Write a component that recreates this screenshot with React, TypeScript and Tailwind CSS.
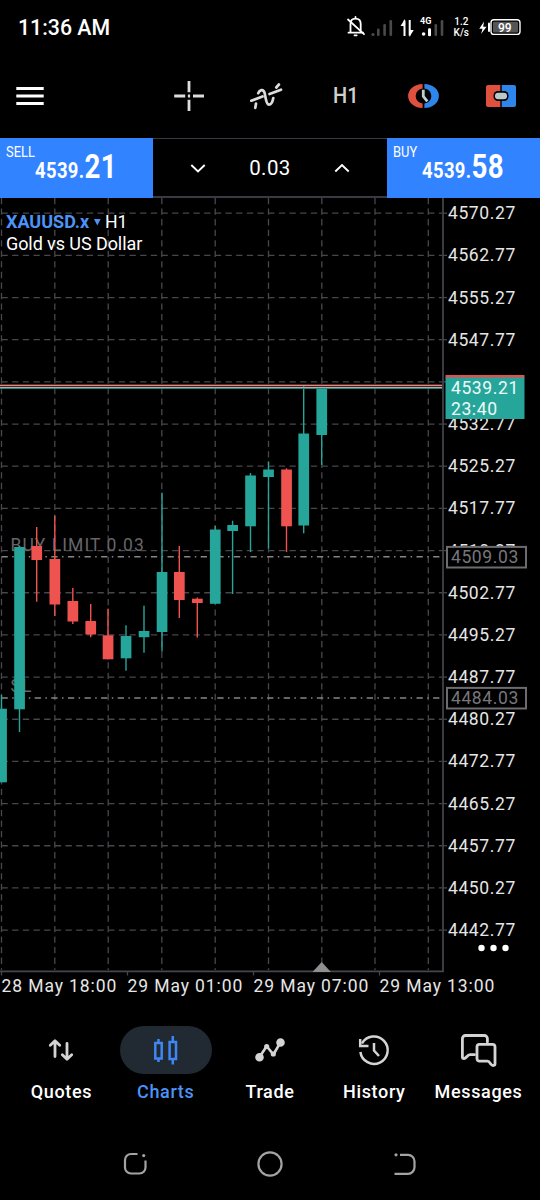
import type { ReactNode } from "react";

type Candle = {
  x: number;
  high: number;
  top: number;
  bottom: number;
  low: number;
  up: boolean;
};

const UP = "#26a69a";
const DOWN = "#ef5350";

const candles: Candle[] = [
  { x: 1.5, high: 695, top: 708.7, bottom: 782.3, low: 782.3, up: true },
  { x: 19.5, high: 546, top: 547, bottom: 709.3, low: 732, up: true },
  { x: 36.7, high: 527, top: 546, bottom: 560, low: 601.7, up: false },
  { x: 54.8, high: 515.7, top: 559, bottom: 604.5, low: 616, up: false },
  { x: 72.8, high: 588, top: 601, bottom: 621.5, low: 624, up: false },
  { x: 90.7, high: 604, top: 621, bottom: 634.5, low: 637.3, up: false },
  { x: 108, high: 608.7, top: 635.3, bottom: 659.3, low: 659.3, up: false },
  { x: 126, high: 625.3, top: 636, bottom: 658.3, low: 670.7, up: true },
  { x: 144, high: 605.7, top: 631, bottom: 637.2, low: 652.7, up: true },
  { x: 162, high: 492.7, top: 572, bottom: 632, low: 651.5, up: true },
  { x: 179.3, high: 546, top: 572, bottom: 600, low: 618, up: false },
  { x: 197.3, high: 597.5, top: 598.7, bottom: 603, low: 637.5, up: false },
  { x: 215.2, high: 526, top: 529.5, bottom: 603.8, low: 603.8, up: true },
  { x: 232.6, high: 520.7, top: 525, bottom: 531, low: 594, up: true },
  { x: 250.5, high: 473, top: 475.5, bottom: 526.3, low: 552, up: true },
  { x: 268.5, high: 461.5, top: 469.5, bottom: 477, low: 548.5, up: true },
  { x: 286.5, high: 468.3, top: 469.5, bottom: 526.3, low: 552, up: false },
  { x: 303.7, high: 385.7, top: 433.5, bottom: 525.5, low: 533.3, up: true },
  { x: 321.7, high: 387, top: 387.5, bottom: 435, low: 465, up: true },
];

const prices = [
  "4570.27", "4562.77", "4555.27", "4547.77", "4540.27", "4532.77",
  "4525.27", "4517.77", "4510.27", "4502.77", "4495.27", "4487.77",
  "4480.27", "4472.77", "4465.27", "4457.77", "4450.27", "4442.77",
];

const priceY = (i: number) => 213.2 + i * 42.17;

const columns = [1.5, 54.8, 108.2, 161.8, 215.2, 268.5, 321.8, 375, 428.3];

const times = [
  { x: 1.5, label: "28 May 18:00" },
  { x: 127.5, label: "29 May 01:00" },
  { x: 253.5, label: "29 May 07:00" },
  { x: 379.5, label: "29 May 13:00" },
];

function StatusBar() {
  return (
    <div className="flex h-[55px] items-center justify-between px-[18px]">
      <span className="text-[21.3px] font-medium leading-none">11:36 AM</span>
      <svg width="176" height="26" viewBox="346 15 176 26" fill="none">
        {/* muted bell */}
        <g stroke="#fff" strokeWidth="1.8" strokeLinecap="round">
          <path d="M350.5 32.5V24c0-3.5 2.2-5.3 5-5.3 3 0 5.2 2 5.2 5.3v8.5M348.5 32.7h14.5M355.5 17v1.5" />
          <path d="M348 19.5l16 14.7" />
          <path d="M354.5 35.3h2.2" />
        </g>
        <g fill="#4a4a4a">
          <circle cx="373" cy="34.5" r="1.6" />
          <rect x="377" y="28.5" width="2.6" height="7.5" rx="1.2" />
          <rect x="383.3" y="24" width="2.6" height="12" rx="1.2" />
          <rect x="389.5" y="20" width="2.6" height="16" rx="1.2" />
        </g>
        {/* data arrows */}
        <path d="M404.5 36V20.5M409.7 20v15.5" stroke="#fff" strokeWidth="2" />
        <path d="M400.5 26l4.5-7v7zM413.8 30l-4.5 7v-7z" fill="#fff" />
        <text x="420" y="23.5" fontSize="9" fontWeight="700" fill="#fff">4G</text>
        <circle cx="423.6" cy="34" r="1.8" fill="#fff" />
        <rect x="428" y="28.3" width="3" height="8" rx="1.3" fill="#fff" />
        <rect x="434.5" y="24" width="2.6" height="12" rx="1.2" fill="#4a4a4a" />
        <rect x="440.7" y="20" width="2.6" height="16" rx="1.2" fill="#4a4a4a" />
        <text x="461.3" y="25" fontSize="10" fontWeight="500" fill="#fff" textAnchor="middle">1.2</text>
        <text x="461.3" y="36" fontSize="10" fontWeight="500" fill="#fff" textAnchor="middle">K/s</text>
        <path d="M484 21.5l-4.7 7.3h3.2l-1.4 5.2 5.4-7.2h-3.3z" fill="#fff" />
        <path d="M489 23.5v7.5" stroke="#fff" strokeWidth="2" strokeLinecap="round" />
        <rect x="491" y="19.8" width="29" height="14.6" rx="3" stroke="#fff" strokeWidth="1.4" />
        <rect x="493" y="21.8" width="25" height="10.6" rx="1" fill="#555" />
        <text x="504.8" y="31.6" fontSize="12" fontWeight="500" fill="#fff" textAnchor="middle">99</text>
      </svg>
    </div>
  );
}

function Toolbar() {
  return (
    <div className="flex h-[83px] items-center justify-between pb-px pl-4 pr-[24px]">
      <svg width="28" height="20" viewBox="16 86 28 20" stroke="#fff" strokeWidth="2.8">
        <path d="M16.3 88.5h27.4M16.3 96h27.4M16.3 103.5h27.4" />
      </svg>
      <div className="flex w-[342px] items-center">
        <svg width="30" height="30" viewBox="174 81 30 30" stroke="#dcdcdc" strokeWidth="2.8">
          <path d="M174.2 96h11M193 96h11M189 81v11.2M189 99.8V111M187.9 96h2.2" />
        </svg>
        <svg className="ml-[45px]" width="34" height="28" viewBox="249 82 34 28" fill="none" stroke="#dcdcdc" strokeWidth="2.7" strokeLinecap="round">
          <path d="M251.3 100.7l11.2-4.2M269.5 94l11.5-4.3" />
          <path d="M258.2 93.2c1.3-3.2 5-4.800 6.300-.6 1.200 4 1.300 12 4.500 12 2.600 0 3.600-3 4.300-6.600" />
          <path d="M255.300 107.800l.7-4.300M276.300 87.500l2.600-3" />
        </svg>
        <span className="ml-[50px] block w-[24px] origin-left scale-x-[0.93] whitespace-nowrap text-[21.5px] font-medium leading-none text-[#cfcfcf]">
          H1
        </span>
        <svg className="ml-[51px]" width="31" height="26" viewBox="407.5 83 31 26" fill="none">
          <path d="M422.100 84A14.500 12 0 0 0 422.100 108V103.500A8.300 7.600 0 0 1 422.100 88.500z" fill="#e0503f" />
          <path d="M423.900 84A14.500 12 0 0 1 423.900 108V103.500A8.300 7.600 0 0 0 423.900 88.500z" fill="#2f86ea" />
          <path d="M422.800 89.800v6.500l4 5" stroke="#c3ccd2" strokeWidth="2.800" />
        </svg>
        <svg className="ml-auto" width="30" height="22" viewBox="486 85 30 22">
          <path d="M488 85h12.300v22H488a2 2 0 0 1-2-2V87a2 2 0 0 1 2-2z" fill="#e0503f" />
          <path d="M501.700 85H514a2 2 0 0 1 2 2v18a2 2 0 0 1-2 2h-12.300z" fill="#2f86ea" />
          <rect x="493.500" y="91" width="15" height="10" rx="4.500" fill="#000" />
          <rect x="495" y="92.700" width="12" height="6.600" rx="3" fill="#b9c8cc" />
        </svg>
      </div>
    </div>
  );
}

function PriceButton({ side, whole, cents }: { side: string; whole: string; cents: string }) {
  return (
    <button className="flex h-[60px] w-[153px] flex-col items-start bg-[#3183ff] px-1.5 pt-[7px] text-left">
      <span className="block origin-left scale-x-[0.86] text-[15px] leading-[15px]">{side}</span>
      <span className="-mt-[6px] block origin-left translate-x-[29px] scale-x-[0.84] whitespace-nowrap text-[22px] font-bold leading-[26px] tracking-[0.4px]">
        {whole}.<span className="text-[33px]">{cents}</span>
      </span>
    </button>
  );
}

function TradePanel() {
  return (
    <div className="flex h-[60px]">
      <PriceButton side="SELL" whole="4539" cents="21" />
      <div className="flex flex-1 items-center justify-between border-b-2 border-t border-[#3a3a45] px-[36px]">
        <svg width="18" height="12" viewBox="0 0 18 12" fill="none" stroke="#fff" strokeWidth="1.900">
          <path d="M2.300 3l6.700 6.500L15.700 3" />
        </svg>
        <span className="pt-px text-[20.500px] tracking-[0.400px]">0.03</span>
        <svg width="18" height="12" viewBox="0 0 18 12" fill="none" stroke="#fff" strokeWidth="1.900">
          <path d="M2.300 9.500L9 3l6.700 6.500" />
        </svg>
      </div>
      <PriceButton side="BUY" whole="4539" cents="58" />
    </div>
  );
}

function OrderTag({ y, price }: { y: number; price: string }) {
  return (
    <g>
      <rect x="447" y={y - 10.3} width="79" height="20.6" fill="#000" stroke="#6b6b70" strokeWidth="2" />
      <text x="451" y={y + 6} fill="#77777b">{price}</text>
    </g>
  );
}

function Chart() {
  return (
    <svg className="block" width="540" height="802" viewBox="0 198 540 802" fontSize="17.5" letterSpacing="0.6">
      <g stroke="#47474d" strokeWidth="1.3">
        {prices.map((p, i) => (
          <path key={p} d={`M1.5 ${priceY(i)}H442`} strokeDasharray="6.3 4.367" />
        ))}
        {columns.map((x) => (
          <path key={x} d={`M${x} 198V970`} strokeDasharray="6.3 4.25" />
        ))}
      </g>

      <g fill="#66666a" letterSpacing="1.05">
        <text x="10.5" y="551">BUY LIMIT 0.03</text>
        <text x="10.5" y="692">SL</text>
      </g>
      <g stroke="#858585" strokeWidth="1.6" strokeDasharray="6.300 4.400 1.500 4.400">
        <path d="M1.5 556.8H442" />
        <path d="M1.5 698H442" />
      </g>

      {candles.map((c) => (
        <g key={c.x} fill={c.up ? UP : DOWN}>
          <rect x={c.x - 0.7} y={c.high} width="1.4" height={c.low - c.high} />
          <rect x={c.x - 5.3} y={c.top} width="10.7" height={c.bottom - c.top} />
        </g>
      ))}

      {/* ask and bid */}
      <rect x="0" y="384.3" width="442" height="2.2" fill="#93403d" />
      <rect x="0" y="385" width="442" height="1" fill="#d98a84" />
      <rect x="0" y="387" width="442" height="1" fill="#a3b5b2" />
      <rect x="0" y="388" width="442" height="1" fill="#26857c" />

      {/* axes */}
      <g stroke="#45454f" strokeWidth="1.7">
        <path d="M443 198V972" />
        <path d="M0 971.3H443.8" />
        {times.map((t) => (
          <path key={t.x} d={`M${t.x} 971v4.5`} strokeWidth="1.3" />
        ))}
        {prices.map((p, i) => (
          <path key={p} d={`M443 ${priceY(i)}h4`} strokeWidth="1.3" />
        ))}
      </g>
      <path d="M312.5 972l9.2-10 9.2 10z" fill="#8f8f8f" />

      <g fill="#e6e6e6">
        {prices.map((p, i) => (
          <text key={p} x="448" y={priceY(i) + 6}>{p}</text>
        ))}
        {times.map((t) => (
          <text key={t.label} x={t.x} y="991.5" letterSpacing="0.9">{t.label}</text>
        ))}
      </g>

      <rect x="445.5" y="375" width="79" height="3" fill="#d9534f" />
      <rect x="445.5" y="377.5" width="79" height="41.5" fill={UP} />
      <g fill="#eefaf8">
        <text x="451" y="394">4539.21</text>
        <text x="451" y="415">23:40</text>
      </g>
      <OrderTag y={557.2} price="4509.03" />
      <OrderTag y={698.2} price="4484.03" />

      <g fill="#fff">
        <circle cx="481.5" cy="948" r="3.2" />
        <circle cx="493.5" cy="948" r="3.2" />
        <circle cx="505.5" cy="948" r="3.2" />
      </g>

      <g letterSpacing="0">
        <text x="6" y="228" fontSize="18" fontWeight="700" fill="#4c93f7">XAUUSD.x</text>
        <path d="M94 219h6.6l-3.3 6.5z" fill="#4c93f7" />
        <text x="105" y="228" fontSize="17.7" fill="#fff">H1</text>
        <text x="6" y="249.8" fontSize="18" letterSpacing="-0.08" fill="#fff">Gold vs US Dollar</text>
      </g>
    </svg>
  );
}

function NavItem({ label, active, children }: { label: string; active?: boolean; children: ReactNode }) {
  return (
    <div className="flex w-[104.3px] flex-col items-center">
      <div className={`flex h-12 w-[92px] items-center justify-center rounded-full ${active ? "bg-[#212932]" : ""}`}>
        <svg width="40" height="36" viewBox="0 0 40 36" fill="none" strokeLinecap="round" strokeLinejoin="round" stroke="#d4d4d4" strokeWidth="2.8">
          {children}
        </svg>
      </div>
      <span className={`mt-1.5 text-[18px] font-medium leading-6 tracking-[0.65px] ${active ? "text-[#4c93f7]" : "text-white"}`}>
        {label}
      </span>
    </div>
  );
}

function BottomNav() {
  return (
    <div className="flex justify-center pt-[26px]">
      <NavItem label="Quotes">
        <path d="M14 24.5V9.5M9.3 13.2L14 8.7l4.7 4.5M26 11.5v15M21.3 22.700l4.700 4.500 4.700-4.500" />
      </NavItem>
      <NavItem label="Charts" active>
        <g stroke="#3f86f3" strokeWidth="2.5" strokeLinecap="butt" strokeLinejoin="miter">
          <path d="M9.3 11h6.400v15.500H9.300zM12.500 11V7M12.500 26.500v3.500" />
          <path d="M23.600 10h6.400v17h-6.400zM26.800 10V4M26.800 27v5.500" />
        </g>
      </NavItem>
      <NavItem label="Trade">
        <path d="M9.500 25L16.700 14.300l6.700 8.200 7-12" strokeWidth="2.600" />
        <circle cx="9.500" cy="25.200" r="2.900" fill="#d4d4d4" />
        <circle cx="30.500" cy="10.500" r="2.900" fill="#d4d4d4" />
        <circle cx="16.700" cy="14.500" r="1.200" fill="#d4d4d4" />
        <circle cx="23.300" cy="22" r="1.200" fill="#d4d4d4" />
      </NavItem>
      <NavItem label="History">
        <g strokeWidth="2.500" strokeLinecap="butt" strokeLinejoin="miter">
          <path d="M6.400 20A13.700 13.700 0 1 0 8 11.500" />
          <path d="M6.200 7v7h8.300" />
          <path d="M20 11v7.500l5 5.500" />
        </g>
      </NavItem>
      <NavItem label="Messages">
        <path d="M15.500 22.700h-4.500c-3 0-3.500 3.800-6 3.800-1.200 0-1.600-.6-1.600-1.600V6.500a3 3 0 0 1 3-3h19a3 3 0 0 1 3 3v3.500" />
        <path d="M20.500 12.300h13a2.500 2.500 0 0 1 2.500 2.500v17c0 2-2.800 2.300-4 .5-1.200-1.800-1.800-3.100-3.500-3.100h-8A2.500 2.500 0 0 1 18 26.700V14.800a2.500 2.500 0 0 1 2.500-2.500z" />
      </NavItem>
    </div>
  );
}

function SystemNav() {
  return (
    <div className="flex flex-1 items-center justify-between px-[121px] pt-[23px]">
      <svg width="28" height="28" viewBox="0 0 28 28" fill="none" stroke="#a3a3a3" strokeWidth="2.2">
        <path d="M16.500 4H10a6 6 0 0 0-6 6v7.500a6 6 0 0 0 6 6h8.500a6 6 0 0 0 6-6v-7" />
        <circle cx="22.700" cy="5.600" r="1.600" fill="#a3a3a3" stroke="none" />
      </svg>
      <svg width="28" height="28" viewBox="0 0 28 28" fill="none" stroke="#a3a3a3" strokeWidth="2.2">
        <circle cx="14" cy="14" r="11.600" />
      </svg>
      <svg width="28" height="28" viewBox="0 0 28 28" fill="none" stroke="#a3a3a3" strokeWidth="2.2">
        <path d="M9 4.800h8a6.500 6.500 0 0 1 6.500 6.500v6a6.500 6.500 0 0 1-6.500 6.500H3.500" />
        <circle cx="5" cy="4.800" r="1.600" fill="#a3a3a3" stroke="none" />
      </svg>
    </div>
  );
}

export default function App() {
  return (
    <div className="flex h-[1200px] w-[540px] flex-col overflow-hidden bg-black font-[Roboto,'Liberation_Sans',sans-serif] text-white">
      <StatusBar />
      <Toolbar />
      <TradePanel />
      <Chart />
      <BottomNav />
      <SystemNav />
    </div>
  );
}
